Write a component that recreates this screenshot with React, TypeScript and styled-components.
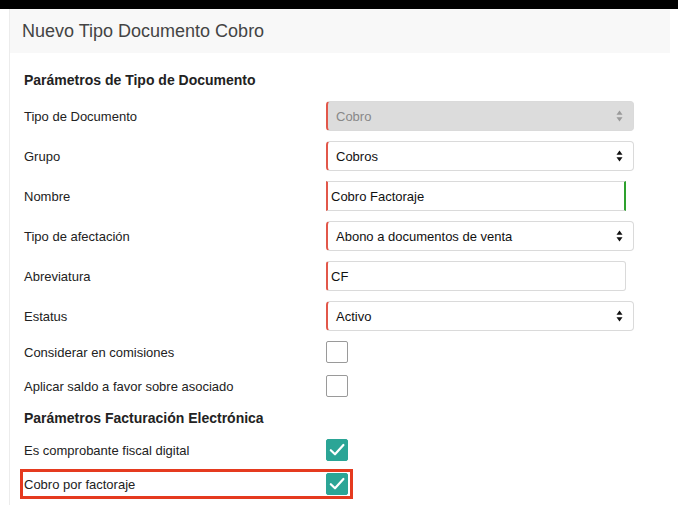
import React from "react";
import styled, { createGlobalStyle } from "styled-components";

const Global = createGlobalStyle`
  html, body { margin: 0; padding: 0; background: #fff; }
  body { font-family: "Liberation Sans", Arial, Helvetica, sans-serif; color: #222; }
`;

const TopBar = styled.div`
  height: 9px;
  background: #000;
`;

const Panel = styled.div`
  margin-left: 9px;
  width: 660px;
  border-left: 1px solid #ececec;
  padding-bottom: 10px;
`;

const Header = styled.div`
  height: 44px;
  background: #f8f8f8;
  display: flex;
  align-items: center;
  padding-left: 12px;
  font-size: 18px;
  color: #444;
`;

const Body = styled.div`
  display: flex;
  flex-direction: column;
  padding: 17px 0 0 14px;
`;

const SectionTitle = styled.div<{ $top?: number }>`
  height: 20px;
  line-height: 20px;
  font-size: 14px;
  font-weight: bold;
  color: #222;
  margin-top: ${(p) => p.$top ?? 0}px;
  margin-bottom: 11px;
`;

const Group = styled.div<{ $gap: number; $bottom?: number }>`
  display: flex;
  flex-direction: column;
  gap: ${(p) => p.$gap}px;
  margin-bottom: ${(p) => p.$bottom ?? 0}px;
`;

const Row = styled.div<{ $highlight?: boolean }>`
  display: grid;
  grid-template-columns: 302px auto;
  align-items: center;
  width: ${(p) => (p.$highlight ? "325px" : "auto")};
  outline: ${(p) => (p.$highlight ? "3px solid #e53a1f" : "none")};
  outline-offset: 1px;
`;

const Label = styled.div`
  font-size: 13px;
  color: #222;
`;

const SelectBox = styled.div<{ $disabled?: boolean }>`
  box-sizing: border-box;
  width: 308px;
  height: 30px;
  display: flex;
  align-items: center;
  justify-content: space-between;
  padding: 0 10px 0 8px;
  border: 1px solid #dadada;
  border-left: 2px solid #e2574a;
  border-radius: 4px;
  background: ${(p) => (p.$disabled ? "#dcdcdc" : "#fff")};
  color: ${(p) => (p.$disabled ? "#888" : "#111")};
  font-size: 13px;
`;

const InputBox = styled.div<{ $valid?: boolean; $radius?: number }>`
  box-sizing: border-box;
  width: 300px;
  height: 30px;
  display: flex;
  align-items: center;
  padding-left: 3px;
  border: 1px solid #dadada;
  border-left: 2px solid #e2574a;
  border-right: ${(p) => (p.$valid ? "2px solid #2ea12e" : "1px solid #dadada")};
  border-radius: ${(p) => p.$radius ?? 0}px;
  background: #fff;
  color: #111;
  font-size: 13px;
`;

const Check = styled.div<{ $checked?: boolean }>`
  box-sizing: border-box;
  width: 22px;
  height: 22px;
  border-radius: 2px;
  border: 1px solid ${(p) => (p.$checked ? "#2ba596" : "#9a9a9a")};
  background: ${(p) => (p.$checked ? "#2ba596" : "#fff")};
  display: flex;
  align-items: center;
  justify-content: center;
`;

const Arrows = ({ color }: { color: string }) => (
  <svg width="7" height="12" viewBox="0 0 7 12">
    <path d="M3.5 0.5 L6.5 4.8 L0.5 4.8 Z" fill={color} />
    <path d="M3.5 11.5 L6.5 7.2 L0.5 7.2 Z" fill={color} />
  </svg>
);

const Tick = () => (
  <svg width="16" height="14" viewBox="0 0 16 14">
    <path d="M1.8 7.2 L6 11.3 L14.4 2" fill="none" stroke="#fff" strokeWidth="2.2" strokeLinecap="round" strokeLinejoin="round" />
  </svg>
);

const Select = ({ value, disabled }: { value: string; disabled?: boolean }) => (
  <SelectBox $disabled={disabled}>
    <span>{value}</span>
    <Arrows color={disabled ? "#9a9a9a" : "#111"} />
  </SelectBox>
);

export default function App() {
  return (
    <>
      <Global />
      <TopBar />
      <Panel>
        <Header>Nuevo Tipo Documento Cobro</Header>
        <Body>
          <SectionTitle>Parámetros de Tipo de Documento</SectionTitle>
          <Group $gap={10} $bottom={10}>
            <Row>
              <Label>Tipo de Documento</Label>
              <Select value="Cobro" disabled />
            </Row>
            <Row>
              <Label>Grupo</Label>
              <Select value="Cobros" />
            </Row>
            <Row>
              <Label>Nombre</Label>
              <InputBox $valid>Cobro Factoraje</InputBox>
            </Row>
            <Row>
              <Label>Tipo de afectación</Label>
              <Select value="Abono a documentos de venta" />
            </Row>
            <Row>
              <Label>Abreviatura</Label>
              <InputBox $radius={3}>CF</InputBox>
            </Row>
            <Row>
              <Label>Estatus</Label>
              <Select value="Activo" />
            </Row>
          </Group>
          <Group $gap={12}>
            <Row>
              <Label>Considerar en comisiones</Label>
              <Check />
            </Row>
            <Row>
              <Label>Aplicar saldo a favor sobre asociado</Label>
              <Check />
            </Row>
          </Group>
          <SectionTitle $top={11}>Parámetros Facturación Electrónica</SectionTitle>
          <Group $gap={12}>
            <Row>
              <Label>Es comprobante fiscal digital</Label>
              <Check $checked>
                <Tick />
              </Check>
            </Row>
            <Row $highlight>
              <Label>Cobro por factoraje</Label>
              <Check $checked>
                <Tick />
              </Check>
            </Row>
          </Group>
        </Body>
      </Panel>
    </>
  );
}
